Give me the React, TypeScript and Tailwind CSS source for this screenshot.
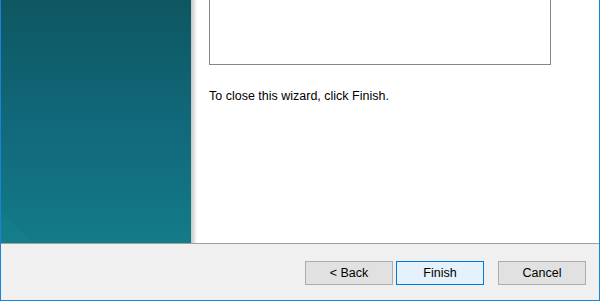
export default function App() {
  return (
    <div
      className="w-[600px] h-[301px] flex flex-col border-x border-b border-[#1883d7] bg-white overflow-hidden"
      style={{ fontFamily: '"Liberation Sans", Arial, sans-serif' }}
    >
      {/* Wizard body */}
      <div className="h-[243px] flex shrink-0">
        <div className="w-[190px] bg-gradient-to-b from-[#0e5761] via-[#11687a] to-[#137b88] relative overflow-hidden">
          <div className="absolute -left-[30px] bottom-[-40px] w-[60px] h-[60px] rotate-45 bg-[#1a8690]/25" />
        </div>
        <div className="w-[6px] bg-gradient-to-r from-[#c4c4c4] to-white" />
        <div className="flex-1 pl-[12px] flex flex-col">
          <div className="w-[342px] h-[65px] border-x border-b border-[#828790] bg-white" />
          <p className="mt-[24px] text-[12.5px] leading-[15px] text-black">To close this wizard, click Finish.</p>
        </div>
      </div>

      {/* Separator */}
      <div className="h-px bg-[#a0a0a0] shrink-0" />

      {/* Button bar */}
      <div className="flex-1 bg-[#f0f0f0] flex items-start justify-end pt-[17px] pr-[13px]">
        <button className="w-[88px] h-[24px] bg-[#e1e1e1] border border-[#adadad] text-[12.5px] text-black">
          &lt; Back
        </button>
        <button className="ml-[3px] w-[88px] h-[24px] bg-[#e5f1fb] border border-[#0078d7] text-[12.5px] text-black">
          Finish
        </button>
        <button className="ml-[14px] w-[88px] h-[24px] bg-[#e1e1e1] border border-[#adadad] text-[12.5px] text-black">
          Cancel
        </button>
      </div>
    </div>
  );
}
